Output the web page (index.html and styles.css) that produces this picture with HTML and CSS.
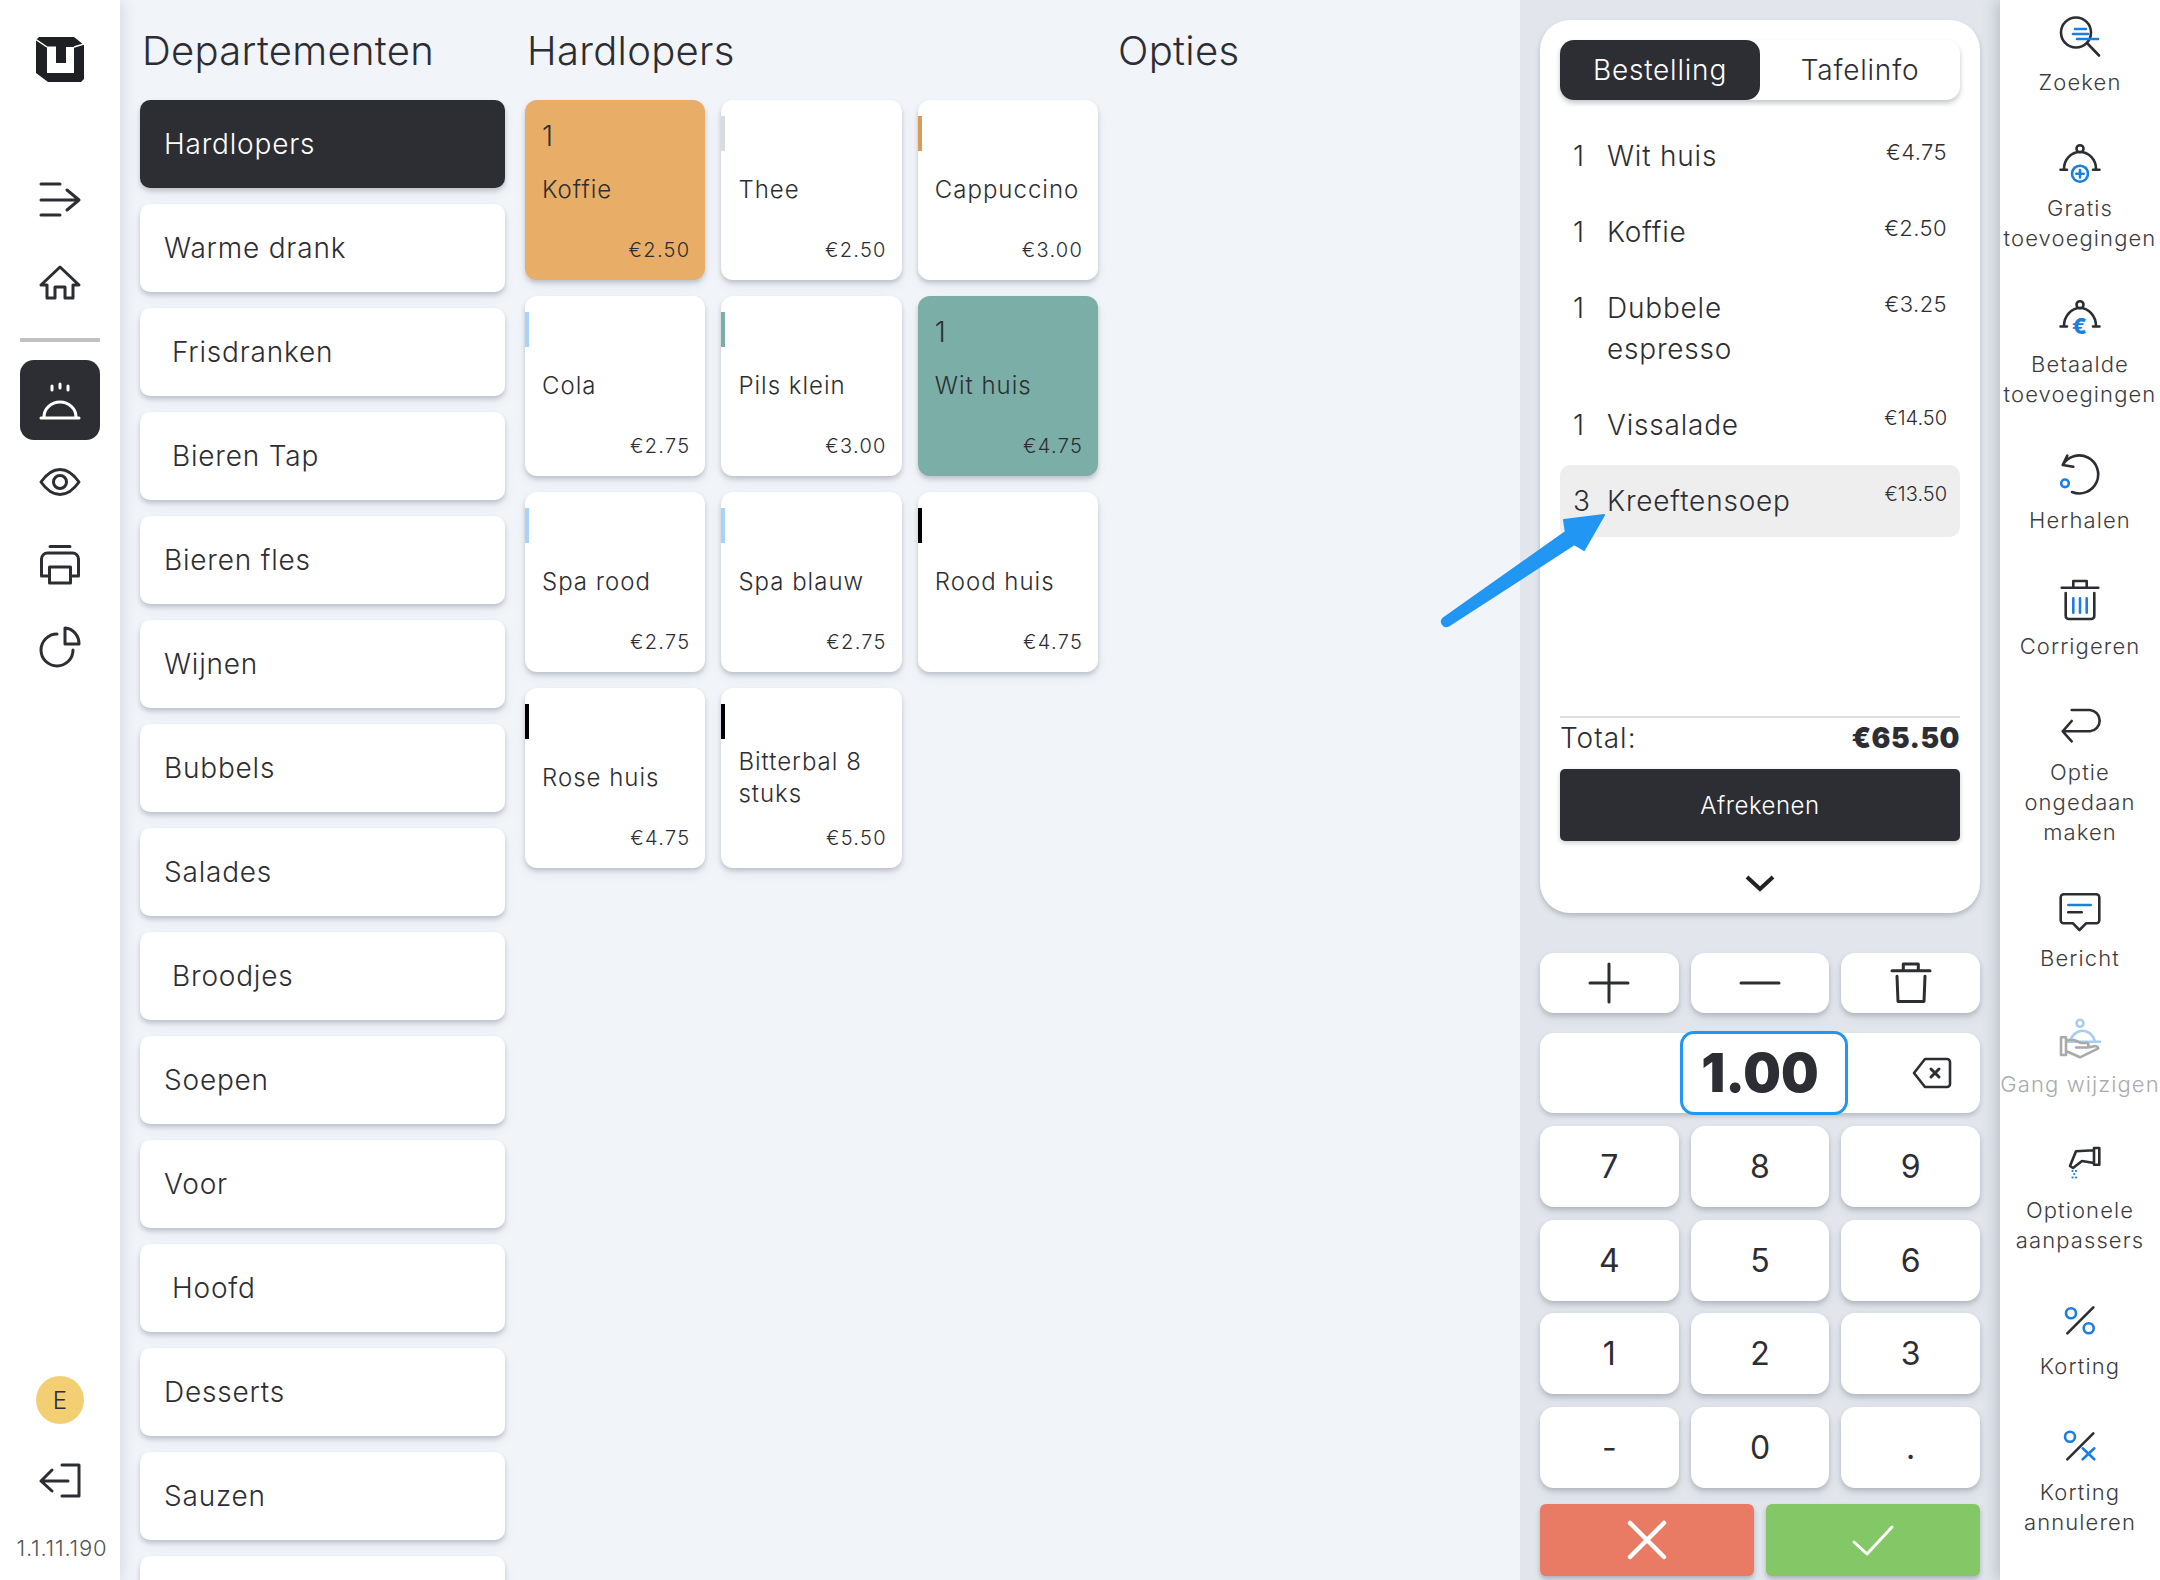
FILE: index.html
```html
<!DOCTYPE html>
<html lang="nl">
<head>
<meta charset="utf-8">
<title>Kassa</title>
<link rel="stylesheet" href="styles.css">
</head>
<body>
<div class="app">
  <aside class="nav">
    <svg class="logo" viewBox="0 0 48 45"><path class="logo-cube" d="M0 3L3 0H38L48 8V42L45 45H12L0 36Z"/><path class="logo-u" d="M11 9.500H20V26H30V10H38V36H11Z"/><path class="logo-gap" d="M0 2.500L11 10M38 10L48 7"/></svg>
    <svg class="ic nav-first" viewBox="0 0 40 40"><path d="M1 4H20M1 20H39M1 35H20M27 10L39 20L27 30"/></svg>
    <svg class="ic nav-home" viewBox="0 0 40 40"><path d="M1 23L20 5L39 23H33V36H25V25H15V36H7V23Z"/></svg>
    <div class="nav-sep"></div>
    <div class="nav-active"><svg class="ic" viewBox="0 0 40 40"><path d="M12 6V10M20 4V8M28 6V10M4 37A16 15 0 0 1 36 37M1 38H39"/></svg></div>
    <svg class="ic nav-eye" viewBox="0 0 40 40"><path d="M1 20C8 10 14 7.500 20 7.500S32 10 39 20C32 30 26 32.500 20 32.500S8 30 1 20Z"/><circle cx="20" cy="20" r="6.500"/></svg>
    <svg class="ic nav-print" viewBox="0 0 40 40"><path d="M10 1.500H30M9 31H1.500V14A6 6 0 0 1 7.500 8H32.500A6 6 0 0 1 38.500 14V31H31"/><rect x="9.500" y="22" width="21" height="16"/></svg>
    <svg class="ic nav-pie" viewBox="0 0 40 40"><path d="M25 2A15 16 0 0 1 39 18H25ZM17 8A16 16 0 1 0 33 24"/></svg>
    <div class="nav-bottom">
      <div class="avatar">E</div>
      <svg class="ic nav-out" viewBox="0 0 40 40"><path d="M22 5H39V36H22M1 21H28M12 10L1 21L12 31"/></svg>
      <div class="version">1.1.11.190</div>
    </div>
  </aside>

  <main class="main">
    <section class="col-dept">
      <h1 class="title">Departementen</h1>
      <div class="dept-list">
        <button class="dept dept-on">Hardlopers</button>
        <button class="dept">Warme drank</button>
        <button class="dept dept-in">Frisdranken</button>
        <button class="dept dept-in">Bieren Tap</button>
        <button class="dept">Bieren fles</button>
        <button class="dept">Wijnen</button>
        <button class="dept">Bubbels</button>
        <button class="dept">Salades</button>
        <button class="dept dept-in">Broodjes</button>
        <button class="dept">Soepen</button>
        <button class="dept">Voor</button>
        <button class="dept dept-in">Hoofd</button>
        <button class="dept">Desserts</button>
        <button class="dept">Sauzen</button>
        <button class="dept"></button>
      </div>
    </section>
    <section class="col-items">
      <h1 class="title">Hardlopers</h1>
      <div class="items">
        <div class="item item-orange"><span class="count">1</span><span class="name">Koffie</span><span class="price">€2.50</span></div>
        <div class="item"><i class="mark m-grey"></i><span class="name">Thee</span><span class="price">€2.50</span></div>
        <div class="item"><i class="mark m-orange"></i><span class="name">Cappuccino</span><span class="price">€3.00</span></div>
        <div class="item"><i class="mark m-blue"></i><span class="name">Cola</span><span class="price">€2.75</span></div>
        <div class="item"><i class="mark m-teal"></i><span class="name">Pils klein</span><span class="price">€3.00</span></div>
        <div class="item item-teal"><span class="count">1</span><span class="name">Wit huis</span><span class="price">€4.75</span></div>
        <div class="item"><i class="mark m-blue"></i><span class="name">Spa rood</span><span class="price">€2.75</span></div>
        <div class="item"><i class="mark m-blue"></i><span class="name">Spa blauw</span><span class="price">€2.75</span></div>
        <div class="item"><i class="mark m-black"></i><span class="name">Rood huis</span><span class="price">€4.75</span></div>
        <div class="item"><i class="mark m-black"></i><span class="name">Rose huis</span><span class="price">€4.75</span></div>
        <div class="item"><i class="mark m-black"></i><span class="name">Bitterbal 8 stuks</span><span class="price">€5.50</span></div>
      </div>
    </section>
    <section class="col-opts">
      <h1 class="title">Opties</h1>
    </section>
  </main>

  <section class="panel">
    <div class="order">
      <div class="tabs"><div class="tab tab-on">Bestelling</div><div class="tab">Tafelinfo</div></div>
      <div class="rows">
        <div class="row"><span class="qty">1</span><span class="rname">Wit huis</span><span class="rprice">€4.75</span></div>
        <div class="row"><span class="qty">1</span><span class="rname">Koffie</span><span class="rprice">€2.50</span></div>
        <div class="row"><span class="qty">1</span><span class="rname">Dubbele<br>espresso</span><span class="rprice">€3.25</span></div>
        <div class="row"><span class="qty">1</span><span class="rname">Vissalade</span><span class="rprice rprice-sm">€14.50</span></div>
        <div class="row row-on"><span class="qty">3</span><span class="rname">Kreeftensoep</span><span class="rprice rprice-sm">€13.50</span></div>
      </div>
      <div class="total"><span>Total:</span><b>€65.50</b></div>
      <button class="pay">Afrekenen</button>
      <div class="more"><svg class="chev" viewBox="0 0 32 18"><path d="M3 3L16 15L29 3"/></svg></div>
    </div>
    <div class="actions">
      <button class="key"><svg class="ic key-ic" viewBox="0 0 40 40"><path d="M20 1V39M1 20H39"/></svg></button>
      <button class="key"><svg class="ic key-ic" viewBox="0 0 40 40"><path d="M1 20H39"/></svg></button>
      <button class="key"><svg class="ic key-ic" viewBox="0 0 40 40"><path d="M1 7.700H39M12.300 7.700V1H27.300V7.700M6 13.300L7 38.500H33L34 13.300"/></svg></button>
    </div>
    <div class="display">
      <div class="amount">1.00</div>
      <svg class="ic back" viewBox="0 0 38 30"><path d="M12 1H34A3 3 0 0 1 37 4V26A3 3 0 0 1 34 29H12L1 15Z"/><path class="back-x" d="M18 11L26 19M26 11L18 19"/></svg>
    </div>
    <div class="pad">
      <button class="key num">7</button><button class="key num">8</button><button class="key num">9</button>
      <button class="key num">4</button><button class="key num">5</button><button class="key num">6</button>
      <button class="key num">1</button><button class="key num">2</button><button class="key num">3</button>
      <button class="key num">-</button><button class="key num">0</button><button class="key num">.</button>
    </div>
    <div class="confirm">
      <button class="cbtn cancel"><svg class="ic cic" viewBox="0 0 40 40"><path d="M3 3L37 37M37 3L3 37"/></svg></button>
      <button class="cbtn ok"><svg class="ic cic thin" viewBox="0 0 40 40"><path d="M1 22L14 34L39 7"/></svg></button>
    </div>
  </section>

  <aside class="tools">
    <div class="tool"><svg class="ic" viewBox="0 0 40 40"><circle cx="16" cy="16.500" r="15"/><path d="M27 27L39 39.500"/><path class="blue" d="M15 13H26M13 18H28M17 23H38"/></svg><span>Zoeken</span></div>
    <div class="tool"><svg class="ic" viewBox="0 0 40 40"><circle cx="20" cy="6.700" r="3.500"/><path d="M4 27A16 17 0 0 1 36 27M0.500 27.700H7M33 27.700H39.500"/><circle class="blue" cx="20" cy="31.700" r="8"/><path class="blue" d="M20 28V35.400M16.300 31.700H23.700"/></svg><span>Gratis toevoegingen</span></div>
    <div class="tool"><svg class="ic" viewBox="0 0 40 40"><circle cx="20" cy="6.700" r="3.500"/><path d="M4 28A16 18 0 0 1 36 28M0.500 28.500H7M33 28.500H39.500"/><text class="euro" x="20" y="36">€</text></svg><span>Betaalde toevoegingen</span></div>
    <div class="tool"><svg class="ic" viewBox="0 0 40 40"><path d="M12 38A19 19 0 1 0 2.700 11M7.300 1.700L2.700 11L13.300 12.700"/><circle class="blue" cx="5" cy="29.300" r="3.800"/></svg><span>Herhalen</span></div>
    <div class="tool"><svg class="ic" viewBox="0 0 40 40"><path d="M1.700 7.700H38.300M13.300 7.700V1H26.700V7.700M5.700 13V36A3 3 0 0 0 8.700 39H31.300A3 3 0 0 0 34.300 36V13"/><path class="blue" d="M13.300 18.300V32.700M20 18.300V32.700M26.700 18.300V32.700"/></svg><span>Corrigeren</span></div>
    <div class="tool"><svg class="ic" viewBox="0 0 40 40"><path d="M11.700 4H30A10.700 10.700 0 0 1 30 25.300H2.700M11.700 15L2.700 25.300L11.700 35.300"/></svg><span>Optie ongedaan maken</span></div>
    <div class="tool"><svg class="ic" viewBox="0 0 40 40"><path d="M3.700 2.300H36.300A3 3 0 0 1 39.300 5.300V28.300A3 3 0 0 1 36.300 31.300H26L19.500 38L13 31.300H3.700A3 3 0 0 1 0.700 28.300V5.300A3 3 0 0 1 3.700 2.300Z"/><path class="blue" d="M8.300 13H30.700"/><path d="M8.300 20.300H21.700"/></svg><span>Bericht</span></div>
    <div class="tool tool-off"><svg class="ic" viewBox="0 0 40 40"><g class="pale"><circle cx="20" cy="5.300" r="3.500"/><path d="M10 23.700A13 15 0 0 1 35 23.700M7.300 23.700H40"/></g><path d="M1 19.300H6V37H1ZM6 22H14L21 25H27C29 25 29 29.500 27 29.500H16M6 33L20 39.300L38.300 30.300C38 28 35 27.500 33 28.500L28 29.500"/></svg><span>Gang wijzigen</span></div>
    <div class="tool"><svg class="ic" viewBox="0 0 40 40"><path d="M34 4H39.300V20.700H34ZM34 6.300L16 7.300L10 22L13 24L22 17L34 19"/><path class="dots" d="M12.500 27H12.600M16 27H16.100M14.200 30H14.300M12.500 33.500H12.600M16 33.500H16.100"/></svg><span>Optionele aanpassers</span></div>
    <div class="tool"><svg class="ic" viewBox="0 0 40 40"><circle class="blue" cx="11" cy="13.300" r="5"/><circle class="blue" cx="28.700" cy="28.300" r="5"/><path d="M33.300 7.300L7.300 33.300"/></svg><span>Korting</span></div>
    <div class="tool"><svg class="ic" viewBox="0 0 40 40"><circle class="blue" cx="10" cy="10.700" r="5"/><path d="M33.300 7.300L7.300 33.300"/><path class="blue" d="M22.700 22.300L34.300 33.300M34.300 22.300L22.700 33.300"/></svg><span>Korting annuleren</span></div>
  </aside>

  <svg class="pointer" viewBox="0 0 170 120"><path class="pointer-shape" d="M2.500 111.300L124.800 24.800L123 13L163 8L143 43L133.200 37.200L7.500 118.700A4.500 4.500 0 0 1 2.500 111.300Z"/></svg>
</div>
</body>
</html>
```
FILE: styles.css
```css
* { box-sizing: border-box; }
html, body { margin: 0; height: 100%; }
body { font-family: Inter, "Noto Sans", sans-serif; color: #2d2e33; background: #f1f4f9; }
button { font: inherit; color: inherit; border: 0; }

.app { position: relative; display: flex; width: 2160px; height: 1580px; overflow: hidden; }

.ic { fill: none; stroke: currentColor; stroke-width: 2.600; stroke-linecap: round; stroke-linejoin: round; width: 40px; height: 40px; flex: none; display: block; overflow: visible; }
.ic .blue { stroke: #1a7fe0; }

/* left nav */
.nav { position: relative; z-index: 2; width: 120px; flex: none; background: #fff; box-shadow: 2px 0 14px rgba(60,70,90,.16); display: flex; flex-direction: column; align-items: center; }
.nav > .ic, .nav-active .ic, .nav-out { stroke-width: 3; }
.logo { width: 48px; height: 45px; margin-top: 37px; }
.logo-cube { fill: #1f2024; }
.logo-u { fill: #fff; }
.logo-gap { stroke: #fff; stroke-width: 1.500; fill: none; }
.nav-first { margin-top: 98px; }
.nav-home { margin-top: 42px; }
.nav-sep { width: 80px; height: 4px; background: #c2c2c2; margin-top: 36px; }
.nav-active { width: 80px; height: 80px; margin-top: 18px; border-radius: 14px; background: #2d2e33; color: #fff; display: flex; align-items: center; justify-content: center; }
.nav-eye { margin-top: 22px; }
.nav-print { margin-top: 43px; }
.nav-pie { margin-top: 41px; }
.nav-bottom { margin-top: auto; display: flex; flex-direction: column; align-items: center; padding-bottom: 18px; }
.avatar { width: 48px; height: 48px; border-radius: 50%; background: #f3cf73; display: flex; align-items: center; justify-content: center; font-size: 24px; font-weight: 300; }
.nav-out { margin-top: 36px; }
.version { margin-top: 34px; padding-left: 4px; font-size: 22px; font-weight: 300; line-height: 28px; letter-spacing: .8px; color: #555; white-space: nowrap; }

/* main */
.main { flex: 1; min-width: 0; display: flex; padding-left: 20px; background: #f1f4f9; }
.title { margin: 24px 0 0; height: 76px; font-size: 40px; font-weight: 300; line-height: 54px; letter-spacing: .3px; color: #2d2e33; padding-left: 2px; white-space: nowrap; }
.col-dept { width: 365px; flex: none; }
.dept-list { display: flex; flex-direction: column; gap: 16px; }
.dept { height: 88px; flex: none; border-radius: 10px; background: #fff; box-shadow: 0 3px 4px rgba(40,50,70,.22), 0 6px 14px rgba(40,50,70,.05); text-align: left; padding: 0 0 0 24px; font-size: 28px; font-weight: 300; letter-spacing: .8px; }
.dept-in { padding-left: 32px; }
.dept-on { background: #2d2e33; color: #fff; }
.col-items { width: 574px; flex: none; margin-left: 20px; }
.items { display: grid; grid-template-columns: repeat(3, 180.400px); grid-auto-rows: 180px; gap: 16px; }
.item { position: relative; display: flex; flex-direction: column; border-radius: 12px; background: #fff; box-shadow: 0 3px 4px rgba(40,50,70,.22), 0 6px 14px rgba(40,50,70,.05); padding: 0 17px; }
.item-orange { background: #e8ad66; }
.item-teal { background: #7aaea7; }
.mark { position: absolute; left: 0; top: 16px; width: 4px; height: 35px; }
.m-grey { background: #d8dbe0; }
.m-orange { background: #dc9a57; }
.m-blue { background: #a6d3fa; }
.m-teal { background: #7aaea7; }
.m-black { background: #000; }
.count { position: absolute; left: 17px; top: 19px; font-size: 28px; font-weight: 300; line-height: 34px; }
.name { position: absolute; left: 17px; right: 12px; top: 54px; height: 72px; display: flex; align-items: center; font-size: 24px; font-weight: 300; line-height: 32px; letter-spacing: 1px; }
.price { position: absolute; right: 15px; bottom: 17px; font-size: 20px; font-weight: 300; line-height: 26px; letter-spacing: 1.300px; }
.col-opts { margin-left: 17px; }

/* order panel */
.panel { width: 480px; flex: none; background: #e2e6ec; padding: 20px; display: flex; flex-direction: column; }
.order { height: 893px; flex: none; border-radius: 30px; background: #fff; padding: 20px; box-shadow: 0 3px 5px rgba(40,50,70,.25); display: flex; flex-direction: column; }
.tabs { display: flex; height: 60px; flex: none; border-radius: 14px; background: #fff; box-shadow: 0 3px 5px rgba(40,50,70,.28); font-size: 28px; font-weight: 300; letter-spacing: .8px; }
.tab { flex: 1; display: flex; align-items: center; justify-content: center; border-radius: 14px; }
.tab-on { background: #2d2e33; color: #fff; }
.rows { flex: 1; margin-top: 20px; display: flex; flex-direction: column; gap: 4px; }
.row { display: grid; grid-template-columns: 34px 1fr auto; padding: 15.500px 13px; border-radius: 10px; font-size: 28px; font-weight: 300; line-height: 41px; letter-spacing: .8px; }
.row-on { background: #eeeeee; }
.rprice { font-size: 22px; line-height: 32px; letter-spacing: .4px; }
.rprice-sm { font-size: 20px; line-height: 26px; letter-spacing: 0; }
.total { display: flex; justify-content: space-between; align-items: center; height: 42px; border-top: 2px solid #ddd; font-size: 28px; font-weight: 300; letter-spacing: 1px; flex: none; }
.total b { font-weight: 900; letter-spacing: .5px; }
.pay { height: 72px; margin-top: 11px; flex: none; border-radius: 5px; background: #2d2e33; color: #fff; font-size: 24px; font-weight: 300; letter-spacing: .5px; box-shadow: 0 2px 5px rgba(0,0,0,.2); }
.more { height: 72px; flex: none; margin-bottom: -20px; display: flex; justify-content: center; padding-top: 33px; }
.chev { width: 32px; height: 18px; fill: none; stroke: #222; stroke-width: 4; }

.actions { display: grid; grid-template-columns: repeat(3, 1fr); gap: 12px; height: 60px; margin-top: 40px; flex: none; }
.key { border-radius: 14px; background: #fff; box-shadow: 0 3px 5px rgba(40,50,70,.22), 0 6px 12px rgba(40,50,70,.06); display: flex; align-items: center; justify-content: center; padding: 0; }
.key-ic { stroke-width: 3; }
.display { display: flex; align-items: center; justify-content: space-between; height: 80px; margin-top: 20px; flex: none; border-radius: 14px; background: #fff; box-shadow: 0 3px 5px rgba(40,50,70,.22); padding: 0 29px 0 140px; }
.amount { width: 168px; height: 84px; padding-right: 8px; border: 3px solid #2196f3; border-radius: 14px; background: #fff; display: flex; align-items: center; justify-content: center; font-size: 53px; font-weight: 900; }
.back { width: 38px; height: 30px; }
.back-x { stroke-width: 3; }
.pad { display: grid; grid-template-columns: repeat(3, 1fr); grid-auto-rows: 81px; gap: 12.500px 12px; margin-top: 13px; flex: none; }
.num { font-size: 32px; }
.confirm { display: grid; grid-template-columns: 1fr 1fr; gap: 12px; height: 72px; margin-top: 16px; flex: none; }
.cbtn { border-radius: 6px; display: flex; align-items: center; justify-content: center; color: #fff; padding: 0; box-shadow: 0 3px 5px rgba(40,50,70,.3); }
.cancel { background: #e97a63; }
.ok { background: #84c767; }
.cic { stroke-width: 4.500; }
.thin { stroke-width: 3; }

/* right tools */
.tools { position: relative; z-index: 2; width: 160px; flex: none; background: #fff; box-shadow: -3px 0 14px rgba(60,70,90,.25); padding-top: 16px; display: flex; flex-direction: column; align-items: center; gap: 45px; }
.tool { display: flex; flex-direction: column; align-items: center; text-align: center; gap: 11px; font-size: 22px; font-weight: 300; line-height: 30px; letter-spacing: 1.100px; color: #3c3c40; width: 160px; }
.tool .ic { color: #2d2e33; }
.tool-off { color: #a9abae; white-space: nowrap; }
.tool-off .ic { color: #aaa; }
.pale { stroke: #a8ccf2; }
.euro { fill: #1a7fe0; stroke: none; font-family: Inter, sans-serif; font-size: 22px; font-weight: 800; text-anchor: middle; }
.dots { stroke: #1a7fe0; stroke-width: 2.200; }

/* annotation arrow */
.pointer { position: absolute; left: 1441px; top: 507px; width: 170px; height: 120px; z-index: 3; overflow: visible; }
.pointer-shape { fill: #2196f3; stroke: #2196f3; stroke-width: 2; stroke-linejoin: round; }
```
